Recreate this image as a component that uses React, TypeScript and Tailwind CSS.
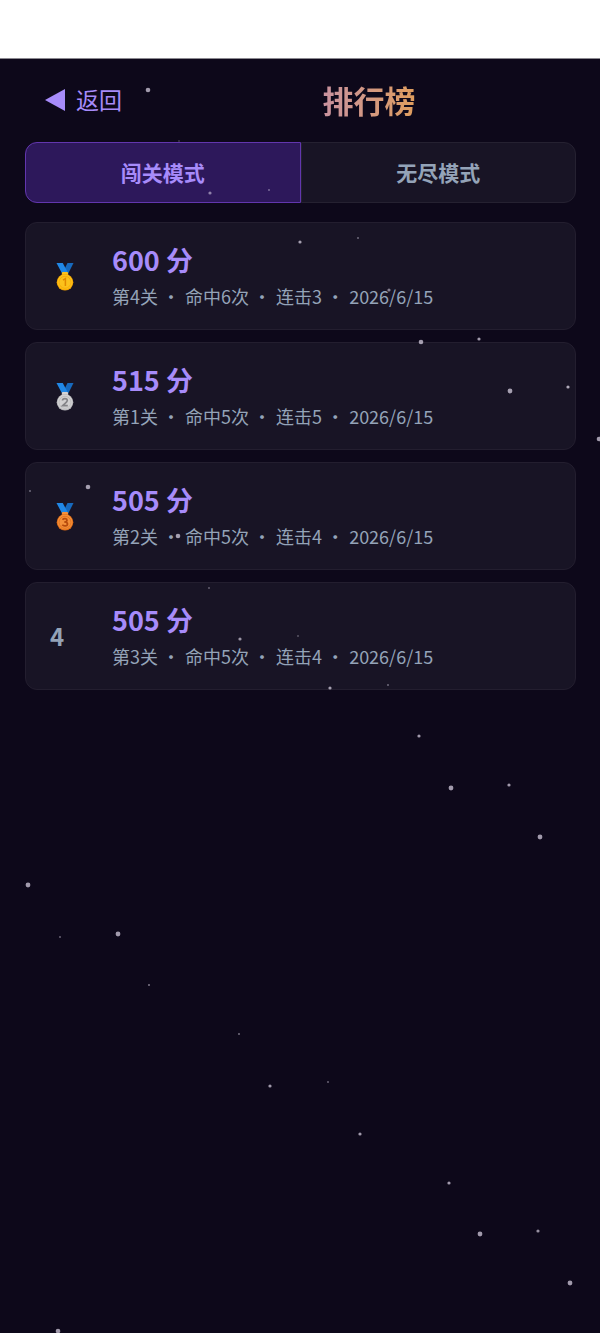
import { useState } from "react"

const MODES = ["闯关模式", "无尽模式"]

const RECORDS = [
  { rank: 1, score: 600, level: 4, hits: 6, combo: 3, date: "2026/6/15" },
  { rank: 2, score: 515, level: 1, hits: 5, combo: 5, date: "2026/6/15" },
  { rank: 3, score: 505, level: 2, hits: 5, combo: 4, date: "2026/6/15" },
  { rank: 4, score: 505, level: 3, hits: 5, combo: 4, date: "2026/6/15" },
]

const MEDALS = [
  { rim: "#f5a400", face: "#fcc21b", digit: "#e28a00" },
  { rim: "#b4b4b8", face: "#d2d2d4", digit: "#848488" },
  { rim: "#dc6a16", face: "#f4903a", digit: "#b64a0c" },
]

// [x, y, radius, opacity]
const STARS = [
  [148, 90, 2.3, 0.65],
  [179, 141, 1, 0.2],
  [210, 193, 1.6, 0.5],
  [269, 190, 1, 0.4],
  [300, 242, 1.6, 0.65],
  [358, 238, 1, 0.4],
  [389, 290, 1.6, 0.5],
  [421, 342, 2.3, 0.65],
  [479, 339, 1.6, 0.65],
  [510, 391, 2.4, 0.65],
  [568, 387, 1.6, 0.7],
  [599, 439, 2.3, 0.65],
  [30, 491, 1, 0.4],
  [88, 487, 2.3, 0.65],
  [178, 536, 2.3, 0.65],
  [209, 588, 1, 0.35],
  [240, 639, 1.6, 0.6],
  [298, 636, 1, 0.3],
  [330, 688, 1.6, 0.65],
  [388, 685, 1, 0.4],
  [419, 736, 1.6, 0.65],
  [451, 788, 2.4, 0.65],
  [509, 785, 1.6, 0.65],
  [540, 837, 2.4, 0.65],
  [28, 885, 2.4, 0.65],
  [60, 937, 1, 0.4],
  [118, 934, 2.4, 0.65],
  [149, 985, 1, 0.5],
  [239, 1034, 1, 0.45],
  [270, 1086, 1.6, 0.65],
  [328, 1082, 1, 0.4],
  [360, 1134, 1.6, 0.65],
  [449, 1183, 1.6, 0.65],
  [480, 1234, 2.4, 0.65],
  [538, 1231, 1.6, 0.6],
  [570, 1283, 2.4, 0.65],
  [58, 1331, 2.3, 0.65],
]

function Starfield() {
  return (
    <svg
      className="pointer-events-none absolute inset-0 h-full w-full"
      viewBox="0 0 600 1333"
      preserveAspectRatio="xMidYMin slice"
      aria-hidden="true"
    >
      {STARS.map(([x, y, r, opacity]) => (
        <circle key={`${x}-${y}`} cx={x} cy={y} r={r} fill="#f1eafa" opacity={opacity} />
      ))}
    </svg>
  )
}

function Medal({ rank }: { rank: number }) {
  const { rim, face, digit } = MEDALS[rank - 1]

  return (
    <svg width="30" height="30" viewBox="0 0 30 30" role="img" aria-label={`第${rank}名`}>
      <path d="M17.5 2H23.5L18.5 12H12.5Z" fill="#1769bd" />
      <path d="M6.5 2H12.8L18 12H11.8Z" fill="#2188e6" />
      <rect x="11.8" y="11" width="6.4" height="3.2" rx="1.2" fill={face} />
      <circle cx="15" cy="21.3" r="8.3" fill={rim} />
      <circle cx="15" cy="21" r="7.5" fill={face} />
      <circle cx="15" cy="21.3" r="6" fill="none" stroke={rim} strokeWidth="0.7" />
      {rank === 1 && (
        <path d="M13 19.2L15.4 17.6V25" fill="none" stroke={digit} strokeWidth="1.5" />
      )}
      {rank === 2 && (
        <path
          d="M12.5 19.5C12.6 17 17.3 16.9 17.3 19.5C17.3 21.2 14.6 22.7 12.7 24.7H17.8"
          fill="none"
          stroke={digit}
          strokeWidth="1.7"
        />
      )}
      {rank === 3 && (
        <path
          d="M12.5 18.7C13.7 17.1 17.1 17.4 17 19.3C17 20.8 15.6 21 14.2 21C15.8 21 17.5 21.4 17.5 23C17.5 25.3 13.6 25.5 12.3 23.8"
          fill="none"
          stroke={digit}
          strokeWidth="1.7"
        />
      )}
    </svg>
  )
}

export default function App() {
  const [mode, setMode] = useState(0)

  return (
    <div className="relative flex min-h-screen flex-col bg-[#0d081a] font-['Noto_Sans_CJK_SC',sans-serif]">
      <div className="h-[59px] border-b border-[#8b8990] bg-white" />

      <main className="flex-1 pr-6 pb-6 pl-[25px]">
        <header className="flex h-[83px] items-center pb-[2px]">
          <button
            type="button"
            className="flex items-center gap-[11px] pl-5 text-[23px] text-[#a78bfa]"
          >
            <svg width="20" height="22" viewBox="0 0 20 22" aria-hidden="true">
              <path d="M0 11L20 0V22Z" fill="currentColor" />
            </svg>
            返回
          </button>
          <h1 className="flex-1 pl-10 text-center text-[31px] leading-10 font-bold">
            <span className="bg-linear-to-r from-[#c9929f] to-[#df9d5c] bg-clip-text text-transparent">
              排行榜
            </span>
          </h1>
        </header>

        <div className="flex h-[61px]">
          {MODES.map((name, i) => (
            <button
              key={name}
              type="button"
              aria-pressed={mode === i}
              onClick={() => setMode(i)}
              className={`flex-1 border text-[21px] font-bold first:rounded-l-xl last:rounded-r-xl ${
                mode === i
                  ? "border-[#6236ae] bg-[#2d185b] text-[#a78bfa]"
                  : "border-[#252131] bg-[#181425] text-[#94a3b8]"
              }`}
            >
              {name}
            </button>
          ))}
        </div>

        <ol className="mt-[19px] flex flex-col gap-3">
          {RECORDS.map((record) => (
            <li
              key={record.rank}
              className="flex h-[108px] items-center rounded-xl border border-[#231e2f] bg-[#181425] px-6"
            >
              <div className="w-[62px] text-2xl font-bold text-[#94a3b8]">
                {record.rank <= 3 ? <Medal rank={record.rank} /> : record.rank}
              </div>
              <div>
                <p className="text-[27px] leading-10 font-bold text-[#a78bfa]">
                  {record.score} 分
                </p>
                <p className="flex gap-[5px] text-lg leading-8 text-[#94a3b8]">
                  <span>第{record.level}关 ·</span>
                  <span>命中{record.hits}次 ·</span>
                  <span>连击{record.combo} ·</span>
                  <span>{record.date}</span>
                </p>
              </div>
            </li>
          ))}
        </ol>
      </main>

      <Starfield />
    </div>
  )
}
